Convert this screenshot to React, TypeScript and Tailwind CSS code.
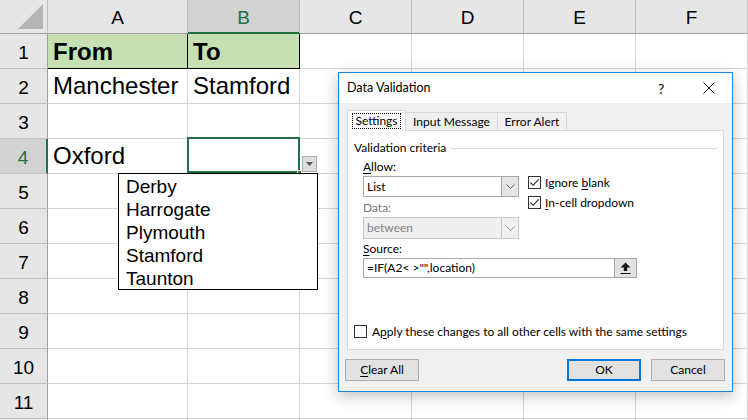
import React from 'react';

const COLS = ['A', 'B', 'C', 'D', 'E', 'F'];
const ROW_COUNT = 12;

const CELLS: Record<string, { text: string; bold?: boolean; fill?: boolean }> = {
  A1: { text: 'From', bold: true, fill: true },
  B1: { text: 'To', bold: true, fill: true },
  A2: { text: 'Manchester' },
  B2: { text: 'Stamford' },
  A4: { text: 'Oxford' },
};

const PLACES = ['Derby', 'Harrogate', 'Plymouth', 'Stamford', 'Taunton'];

const sheetFont = { fontFamily: '"Liberation Sans", Arial, sans-serif' };
const uiFont = { fontFamily: 'Lato, "Noto Sans", sans-serif' };

function CheckBox({ checked }: { checked: boolean }) {
  return (
    <span className="w-[13px] h-[13px] border border-[#333333] bg-white flex items-center justify-center shrink-0">
      {checked && (
        <svg width="11" height="11" viewBox="0 0 11 11">
          <path d="M1.5 5.5 L4.2 8.3 L9.6 2.4" fill="none" stroke="#222" strokeWidth="1.1" />
        </svg>
      )}
    </span>
  );
}

function Chevron({ color = '#606060' }: { color?: string }) {
  return (
    <svg width="9" height="5" viewBox="0 0 9 5">
      <path d="M0.5 0.5 L4.5 4.5 L8.5 0.5" fill="none" stroke={color} />
    </svg>
  );
}

function Cell({ col, row }: { col: string; row: number }) {
  const key = `${col}${row}`;
  const data = CELLS[key];
  const inHeader = row === 1 && (col === 'A' || col === 'B');
  let cls = 'relative border-r border-b flex items-center pl-[5px] whitespace-nowrap text-[24px] text-black ';
  if (inHeader) {
    cls += 'bg-[#c6e0b4] border-b-black border-r-black ';
  } else {
    cls += 'border-[#d4d4d4] ';
  }
  if (data?.bold) cls += 'font-bold text-[21px] pt-[1px] ';
  return (
    <div className={cls}>
      {data?.text}
      {key === 'B4' && (
        <>
          <div className="absolute -left-[1px] -top-[2px] w-[113px] h-[36px] border-2 border-[#217346]" />
          <div className="absolute left-[109px] top-[31px] w-[5px] h-[5px] bg-[#217346] border border-white" />
          <div className="absolute left-[114px] top-[17px] w-[15px] h-[16px] bg-[#dedede] border border-[#ababab] flex items-center justify-center">
            <svg width="7" height="4" viewBox="0 0 7 4">
              <path d="M0 0 H7 L3.5 4 Z" fill="#595959" />
            </svg>
          </div>
        </>
      )}
    </div>
  );
}

function Sheet() {
  return (
    <div
      className="grid grid-cols-[48px_140px_112px_112px_112px_112px_112px] grid-rows-[34px_repeat(12,35px)]"
      style={sheetFont}
    >
      <div className="relative bg-[#e6e6e6] border-r border-b border-r-[#bfbfbf] border-b-[#9e9e9e]">
        <svg className="absolute left-[18px] top-[4px]" width="26" height="26" viewBox="0 0 26 26">
          <path d="M25 0 V25 H0 Z" fill="#b4b4b4" />
        </svg>
      </div>
      {COLS.map((c) => (
        <div
          key={c}
          className={`flex items-center justify-center pt-[4px] text-[19px] border-r ${
            c === 'B'
              ? 'bg-[#d2d2d2] text-[#217346] border-b-2 border-b-[#217346] border-r-[#bfbfbf]'
              : 'bg-[#e6e6e6] text-black border-b border-b-[#9e9e9e] border-r-[#bfbfbf]'
          }`}
        >
          {c}
        </div>
      ))}
      {Array.from({ length: ROW_COUNT }, (_, i) => i + 1).map((r) => (
        <React.Fragment key={r}>
          <div
            className={`flex items-center justify-center pt-[4px] text-[19px] border-b border-b-[#bfbfbf] ${
              r === 4
                ? 'bg-[#d2d2d2] text-[#217346] border-r-2 border-r-[#217346]'
                : 'bg-[#e6e6e6] text-black border-r border-r-[#9e9e9e]'
            }`}
          >
            {r < 12 ? r : ''}
          </div>
          {COLS.map((c) => (
            <Cell key={c} col={c} row={r} />
          ))}
        </React.Fragment>
      ))}
    </div>
  );
}

function DropList() {
  return (
    <div
      className="absolute left-[118px] top-[173px] w-[200px] h-[117px] bg-white border border-black pl-[7px] pt-[1px] text-[19px] leading-[23px] text-black"
      style={sheetFont}
    >
      {PLACES.map((p) => (
        <div key={p}>{p}</div>
      ))}
    </div>
  );
}

function Dialog() {
  return (
    <div
      className="absolute left-[338px] top-[72px] w-[395px] h-[320px] border border-[#1883d7] bg-[#f0f0f0] flex flex-col text-[12px] text-black shadow-[0_4px_14px_rgba(0,0,0,0.25)]"
      style={uiFont}
    >
      {/* title bar */}
      <div className="h-[30px] bg-white flex items-center pl-[8px] shrink-0">
        <span className="flex-1 text-[12.5px]">Data Validation</span>
        <span className="w-[10px] text-[14px] mr-[35px]">?</span>
        <svg className="mr-[17px]" width="12" height="12" viewBox="0 0 12 12">
          <path d="M0.5 0.5 L11.5 11.5 M11.5 0.5 L0.5 11.5" stroke="#111" strokeWidth="1" />
        </svg>
      </div>

      <div className="px-[8px] pt-[7px] flex flex-col">
        {/* tabs */}
        <div className="h-[21px] flex items-end">
          <div className="w-[59px] h-[21px] bg-white border border-b-0 border-[#d9d9d9] flex items-center justify-center relative z-10">
            <span className="border border-dotted border-black px-[2px] leading-[14px]">Settings</span>
          </div>
          <div className="w-[92px] h-[19px] border border-l-0 border-b-0 border-[#d9d9d9] flex items-center justify-center">
            Input Message
          </div>
          <div className="w-[69px] h-[19px] border border-l-0 border-b-0 border-[#d9d9d9] flex items-center justify-center">
            Error Alert
          </div>
        </div>

        {/* panel */}
        <div className="h-[220px] -mt-px bg-white border border-[#d9d9d9] flex flex-col">
          <div className="mt-[9px] mx-[6px] h-[16px] flex items-center gap-[5px]">
            <span>Validation criteria</span>
            <div className="flex-1 h-px bg-[#dcdcdc]" />
          </div>

          <div className="ml-[15px] flex">
            <div className="w-[156px] flex flex-col">
              <div className="mt-[3px] h-[16px] flex items-center">
                <span><u className="underline-offset-2">A</u>llow:</span>
              </div>
              <div className="mt-[1px] h-[21px] border border-[#a8a8a8] flex bg-white">
                <span className="flex-1 pl-[3px] flex items-center">List</span>
                <span className="w-[17px] bg-[#e5e5e5] border-l border-[#a8a8a8] flex items-center justify-center">
                  <Chevron />
                </span>
              </div>
              <div className="mt-[3px] h-[16px] flex items-center text-[#7a7a7a]">Data:</div>
              <div className="mt-[1px] h-[22px] border border-[#c8c8c8] flex bg-[#efefef] text-[#838383]">
                <span className="flex-1 pl-[3px] flex items-center">between</span>
                <span className="w-[17px] border-l border-[#c8c8c8] flex items-center justify-center">
                  <Chevron color="#8a8a8a" />
                </span>
              </div>
            </div>
            <div className="ml-[9px] flex flex-col">
              <div className="mt-[20px] h-[13px] flex items-center gap-[4px]">
                <CheckBox checked />
                <span>Ignore <u className="underline-offset-2">b</u>lank</span>
              </div>
              <div className="mt-[7px] h-[13px] flex items-center gap-[4px]">
                <CheckBox checked />
                <span><u className="underline-offset-2">I</u>n-cell dropdown</span>
              </div>
            </div>
          </div>

          <div className="ml-[15px] mt-[2px] h-[16px] flex items-center">
            <span><u className="underline-offset-2">S</u>ource:</span>
          </div>
          <div className="ml-[15px] mt-[1px] w-[274px] h-[20px] border border-[#a8a8a8] flex bg-white">
            <span className="flex-1 pl-[3px] flex items-center">=IF(A2&lt; &gt;"",location)</span>
            <span className="w-[22px] bg-[#e1e1e1] border-l border-[#a8a8a8] flex items-center justify-center">
              <svg width="11" height="12" viewBox="0 0 11 12">
                <path d="M5.5 0.5 L10.5 5.5 H7.2 V9 H3.8 V5.5 H0.5 Z" fill="#111" />
                <path d="M0.5 11.5 H10.5" stroke="#111" strokeWidth="1" />
              </svg>
            </span>
          </div>

          <div className="mt-auto mb-[11px] ml-[6px] h-[13px] flex items-center gap-[5px]">
            <CheckBox checked={false} />
            <span>A<u className="underline-offset-2">p</u>ply these changes to all other cells with the same settings</span>
          </div>
        </div>
      </div>

      {/* buttons */}
      <div className="mt-[9px] pl-[6px] pr-[7px] flex">
        <button className="w-[74px] h-[22px] bg-[#e1e1e1] border border-[#adadad] flex items-center justify-center">
          <span><u className="underline-offset-2">C</u>lear All</span>
        </button>
        <div className="flex-1" />
        <button className="w-[74px] h-[22px] bg-[#e1e1e1] border-2 border-[#0078d7] flex items-center justify-center">
          OK
        </button>
        <button className="ml-[10px] w-[74px] h-[22px] bg-[#e1e1e1] border border-[#adadad] flex items-center justify-center">
          Cancel
        </button>
      </div>
    </div>
  );
}

export default function App() {
  return (
    <div className="relative w-[748px] h-[420px] overflow-hidden bg-white">
      <Sheet />
      <DropList />
      <Dialog />
    </div>
  );
}
